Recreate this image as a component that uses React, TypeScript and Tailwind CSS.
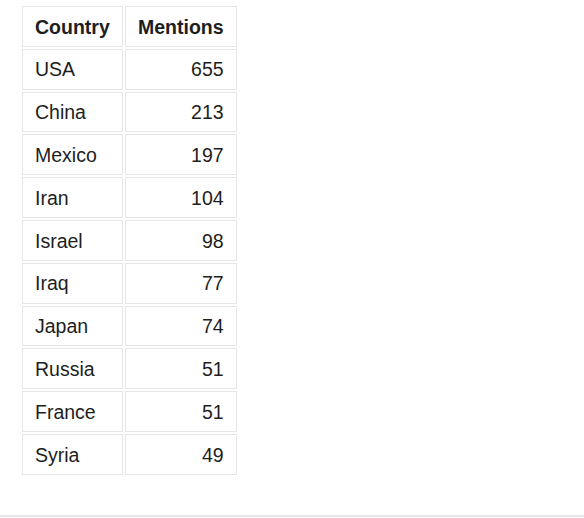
import React from "react";

const rows: [string, number][] = [
  ["USA", 655],
  ["China", 213],
  ["Mexico", 197],
  ["Iran", 104],
  ["Israel", 98],
  ["Iraq", 77],
  ["Japan", 74],
  ["Russia", 51],
  ["France", 51],
  ["Syria", 49],
];

export default function App() {
  return (
    <div
      className="w-[584px] h-[518px] bg-white text-[#1e1e1e] flex flex-col"
      style={{ fontFamily: '"Liberation Sans", Arial, sans-serif' }}
    >
      <div className="h-[515px] pt-[4px] pl-[20px]">
        <table className="border-separate border-spacing-[2px] text-[19.5px] leading-none">
          <thead>
            <tr>
              <th className="h-[40.8px] w-[101px] border border-[#e6e6e6] px-[12px] pt-[2px] text-left font-bold">
                Country
              </th>
              <th className="h-[40.8px] w-[111px] border border-[#e6e6e6] px-[12px] pt-[2px] text-left font-bold">
                Mentions
              </th>
            </tr>
          </thead>
          <tbody>
            {rows.map(([c, n]) => (
              <tr key={c}>
                <td className="h-[40.8px] w-[101px] border border-[#e6e6e6] px-[12px] pt-[2px] text-left">
                  {c}
                </td>
                <td className="h-[40.8px] w-[111px] border border-[#e6e6e6] px-[12px] pt-[2px] text-right">
                  {n}
                </td>
              </tr>
            ))}
          </tbody>
        </table>
      </div>
      <div className="h-[2px] w-full bg-[#e8e8e8]" />
    </div>
  );
}
